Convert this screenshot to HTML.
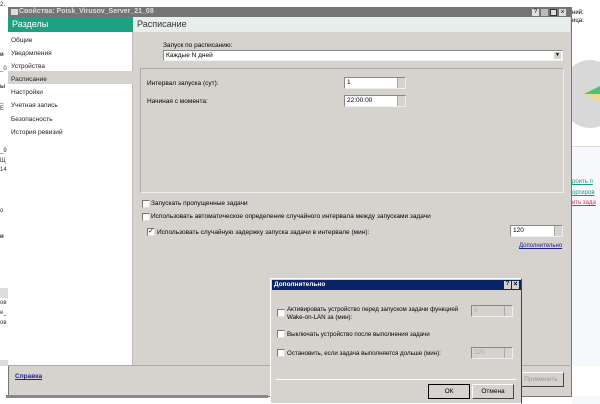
<!DOCTYPE html>
<html><head><meta charset="utf-8"><style>
*{margin:0;padding:0;box-sizing:border-box}
body{width:600px;height:404px;overflow:hidden;background:#fff;position:relative;font-family:"Liberation Sans","DejaVu Sans",sans-serif;font-size:7px;color:#000}
.a{position:absolute}
.cb{position:absolute;width:8px;height:8px;background:#fff;border:1px solid #777;border-right-color:#ddd;border-bottom-color:#ddd}
.in{position:absolute;background:#fff;border:1px solid #888;border-right-color:#eee;border-bottom-color:#eee;font-size:6.5px;padding:1px 2px}
.sp{position:absolute;right:0;top:0;width:8px;height:100%;background:#d6d3ce;border-left:1px solid #aaa}
.btn{position:absolute;background:#d6d3ce;border:1px solid #fff;border-right-color:#444;border-bottom-color:#444;text-align:center;font-size:6.5px}
.f{position:absolute;left:0;font-size:6px;color:#333}
</style></head><body>
<!-- background fragments -->
<div class="f" style="top:2px">2.</div>
<div class="f" style="top:52px;font-weight:bold">и</div>
<div class="f" style="top:66px">_0</div>
<div class="f" style="top:84px;font-weight:bold">ы</div>
<div class="f" style="top:98px">_</div>
<div class="f" style="top:106px">Е</div>
<div class="f" style="top:148px">_9</div>
<div class="f" style="top:158px">Щ</div>
<div class="f" style="top:167px">14</div>
<div class="f" style="top:208px">о</div>
<div class="f" style="top:234px;font-weight:bold">и</div>
<div class="a" style="left:0;top:288px;width:8px;height:10px;background:#ddd"></div>
<div class="f" style="top:300px">ов</div>
<div class="f" style="top:310px">е_</div>
<div class="f" style="top:320px">ов</div>
<div class="a" style="left:0;top:360px;width:8px;height:6px;background:#ddd"></div>
<div class="a" style="left:572px;top:0;width:28px;height:404px;background:#fff"></div>
<div class="a" style="left:572px;top:10px;font-size:6px">ний:</div>
<div class="a" style="left:572px;top:18px;font-size:6px">ица:</div>
<div class="a" style="left:560px;top:60px;width:60px;height:68px;border-radius:50%;background:#d8d8d8"></div>
<div class="a" style="left:584px;top:86px;width:0;height:0;border-top:8px solid transparent;border-right:16px solid #4ec27a"></div>
<div class="a" style="left:584px;top:94px;width:0;height:0;border-bottom:8px solid transparent;border-right:16px solid #f0d890"></div>
<div class="a" style="left:572px;top:146px;width:28px;height:1px;background:#ddd"></div>
<div class="a" style="left:572px;top:147px;width:28px;height:257px;background:#f7f8fb"></div>
<div class="a" style="left:572px;top:179px;font-size:6px;color:#1a9a80;text-decoration:underline">роить п</div>
<div class="a" style="left:572px;top:190px;font-size:6px;color:#1a9a80;text-decoration:underline">ортиров</div>
<div class="a" style="left:572px;top:200px;font-size:6px;color:#d03050;text-decoration:underline">ить зада</div>
<div class="a" style="left:572px;top:366px;width:28px;height:30px;background:#fff"></div>
<!-- main window -->
<div class="a" style="left:8px;top:7px;width:564px;height:390px;background:#d6d3ce;border:1px solid #777"></div>
<div class="a" style="left:8px;top:7px;width:564px;height:10px;background:#747474"></div>
<div class="a" style="left:11px;top:9px;width:7px;height:6px;background:#ddd"></div>
<div class="a" style="left:19px;top:8px;font-size:7px;color:#ddd;font-weight:bold">Свойства: Poisk_Virusov_Server_21_08</div>
<div class="a" style="left:532px;top:9px;width:7px;height:7px;background:#ddd;font-size:6px;line-height:7px;text-align:center">?</div>
<div class="a" style="left:541px;top:9px;width:7px;height:7px;background:#bbb"></div>
<div class="a" style="left:550px;top:9px;width:7px;height:7px;background:#ddd;border:1px solid #333"></div>
<div class="a" style="left:559px;top:9px;width:7px;height:7px;background:#ddd;font-size:7px;line-height:7px;text-align:center">×</div>
<div class="a" style="left:8px;top:17px;width:125px;height:15px;background:#1ea183;color:#fff;font-size:9px;padding:2px 4px">Разделы</div>
<div class="a" style="left:133px;top:17px;width:437px;height:15px;background:#e7eeec;font-size:9px;padding:2px 4px;color:#333">Расписание</div>
<div class="a" style="left:8px;top:32px;width:125px;height:333px;background:#fff;border-right:1px solid #bbb"></div>
<div class="a" style="left:8px;top:71px;width:125px;height:13px;background:#d6d3ce"></div>
<div class="a" style="left:11px;top:34px;font-size:6.5px;line-height:13.1px;color:#222">Общие<br>Уведомления<br>Устройства<br>Расписание<br>Настройки<br>Учетная запись<br>Безопасность<br>История ревизий</div>
<div class="a" style="left:163px;top:42px;font-size:6.5px">Запуск по расписанию:</div>
<div class="in" style="left:163px;top:50px;width:400px;height:11px">Каждые N дней<div class="a" style="right:1px;top:1px;width:7px;height:7px;background:#d6d3ce;font-size:5px;line-height:7px;text-align:center">▼</div></div>
<div class="a" style="left:140px;top:68px;width:424px;height:125px;border:1px solid #eee;border-top-color:#aaa;border-left-color:#aaa"></div>
<div class="a" style="left:147px;top:80px;font-size:6.5px">Интервал запуска (сут):</div>
<div class="a" style="left:147px;top:98px;font-size:6.5px">Начиная с момента:</div>
<div class="in" style="left:344px;top:77px;width:62px;height:12px">1<div class="sp"></div></div>
<div class="in" style="left:344px;top:95px;width:62px;height:12px">22:00:00<div class="sp"></div></div>
<div class="cb" style="left:142px;top:200px"></div>
<div class="a" style="left:151px;top:200px;font-size:6.5px">Запускать пропущенные задачи</div>
<div class="cb" style="left:142px;top:213px"></div>
<div class="a" style="left:151px;top:213px;font-size:6.5px">Использовать автоматическое определение случайного интервала между запусками задачи</div>
<div class="cb" style="left:147px;top:228px;font-size:7px;line-height:6px;text-align:center">✓</div>
<div class="a" style="left:157px;top:229px;font-size:6.5px">Использовать случайную задержку запуска задачи в интервале (мин):</div>
<div class="in" style="left:510px;top:225px;width:53px;height:12px">120<div class="sp"></div></div>
<div class="a" style="left:519px;top:243px;font-size:6px;color:#22228a;text-decoration:underline">Дополнительно</div>
<div class="a" style="left:8px;top:365px;width:564px;height:1px;background:#aaa"></div>
<div class="a" style="left:15px;top:373px;font-size:6.5px;color:#22228a;font-weight:bold;text-decoration:underline">Справка</div>
<div class="btn" style="left:518px;top:372px;width:46px;height:15px;line-height:13px;color:#999">Применить</div>
<div class="a" style="left:6px;top:395px;width:262px;height:3px;background:#888"></div>
<!-- dialog -->
<div class="a" style="left:270px;top:278px;width:252px;height:126px;background:#d6d3ce;border:1px solid #fff;border-right-color:#444"></div>
<div class="a" style="left:272px;top:280px;width:249px;height:10px;background:#0b2466;color:#fff;font-size:6.5px;font-weight:bold;padding:1px 2px">Дополнительно</div>
<div class="a" style="left:504px;top:281px;width:7px;height:8px;background:#d6d3ce;font-size:6px;text-align:center;font-weight:bold">?</div>
<div class="a" style="left:512px;top:281px;width:7px;height:8px;background:#d6d3ce;font-size:7px;line-height:8px;text-align:center;font-weight:bold">×</div>
<div class="cb" style="left:277px;top:309px"></div>
<div class="a" style="left:287px;top:306px;font-size:6.2px;line-height:8px">Активировать устройство перед запуском задачи функцией<br>Wake-on-LAN за (мин):</div>
<div class="in" style="left:471px;top:305px;width:42px;height:12px;background:#d6d3ce;color:#aaa">5<div class="sp"></div></div>
<div class="cb" style="left:277px;top:330px"></div>
<div class="a" style="left:287px;top:331px;font-size:6.2px">Выключать устройство после выполнения задачи</div>
<div class="cb" style="left:277px;top:349px"></div>
<div class="a" style="left:287px;top:350px;font-size:6.2px">Остановить, если задача выполняется дольше (мин):</div>
<div class="in" style="left:471px;top:347px;width:42px;height:12px;background:#d6d3ce;color:#aaa">120<div class="sp"></div></div>
<div class="a" style="left:276px;top:379px;width:240px;height:1px;background:#999;border-bottom:1px solid #fff"></div>
<div class="btn" style="left:428px;top:384px;width:42px;height:15px;line-height:13px;border:1px solid #000">ОК</div>
<div class="btn" style="left:472px;top:384px;width:42px;height:15px;line-height:13px">Отмена</div>
</body></html>
